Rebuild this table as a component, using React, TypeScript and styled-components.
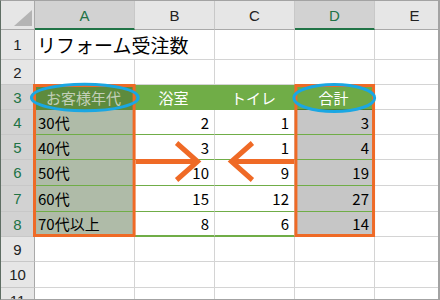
import React from 'react';
import styled, { createGlobalStyle, css } from 'styled-components';

const GlobalStyle = createGlobalStyle`
  html, body {
    margin: 0;
    padding: 0;
    background: #ffffff;
  }
  body {
    font-family: "Noto Sans CJK JP", "Liberation Sans", sans-serif;
  }
`;

type Tone = 'blank' | 'head' | 'headActive' | 'headTotal' | 'body' | 'bodyAge' | 'bodyTotal';

const ages = ['30代', '40代', '50代', '60代', '70代以上'];
const bath = [2, 3, 10, 15, 8];
const toilet = [1, 1, 9, 12, 6];
const total = bath.map((v, i) => v + toilet[i]);

const columns = ['A', 'B', 'C', 'D', 'E'];
const selectedColumns = ['A', 'D'];
const rowNumbers = Array.from({ length: 11 }, (_, i) => i + 1);

const ORANGE = '#ef6a26';
const CYAN = '#1aa7e3';

type CellSpec = { text?: React.ReactNode; tone: Tone; align?: 'left' | 'center' | 'right'; last?: boolean };

const buildRow = (row: number): CellSpec[] => {
  if (row === 3) {
    return [
      { text: 'お客様年代', tone: 'headActive', align: 'center' },
      { text: '浴室', tone: 'head', align: 'center' },
      { text: 'トイレ', tone: 'head', align: 'center' },
      { text: '合計', tone: 'headTotal', align: 'center' },
      { tone: 'blank' },
    ];
  }
  if (row >= 4 && row <= 8) {
    const i = row - 4;
    const last = row === 8;
    return [
      { text: ages[i], tone: 'bodyAge', align: 'left', last },
      { text: bath[i], tone: 'body', align: 'right', last },
      { text: toilet[i], tone: 'body', align: 'right', last },
      { text: total[i], tone: 'bodyTotal', align: 'right', last },
      { tone: 'blank' },
    ];
  }
  return columns.map(() => ({ tone: 'blank' as Tone }));
};

const App: React.FC = () => {
  return (
    <>
      <GlobalStyle />
      <Window>
        <Sheet>
          <Grid>
            <Corner />
            {columns.map((c) => (
              <ColHead key={c} $selected={selectedColumns.includes(c)}>
                {c}
              </ColHead>
            ))}

            {rowNumbers.map((row) => (
              <React.Fragment key={row}>
                <RowHead $selected={row >= 3 && row <= 8}>{row}</RowHead>
                {row === 1 ? (
                  <>
                    <TitleCell>
                      <Title>リフォーム受注数</Title>
                    </TitleCell>
                    <Cell $tone="blank" />
                    <Cell $tone="blank" />
                    <Cell $tone="blank" />
                    <Cell $tone="blank" />
                  </>
                ) : (
                  buildRow(row).map((cell, i) => (
                    <Cell key={i} $tone={cell.tone} $align={cell.align ?? 'left'} $last={!!cell.last}>
                      {cell.text}
                    </Cell>
                  ))
                )}
              </React.Fragment>
            ))}
          </Grid>

          {/* hand-drawn markup over the sheet: boxes, circles and arrows */}
          <Markup viewBox="1 1 438 298" preserveAspectRatio="none">
            <rect x={34.6} y={85.5} width={99.8} height={150} fill="none" stroke={ORANGE} strokeWidth={3} />
            <rect x={296.6} y={85.5} width={77.8} height={150} fill="none" stroke={ORANGE} strokeWidth={3} />

            <ellipse cx={85} cy={97.5} rx={53.5} ry={13.3} fill="none" stroke={CYAN} strokeWidth={3} />
            <ellipse cx={335} cy={98} rx={40.5} ry={13.5} fill="none" stroke={CYAN} strokeWidth={3} />

            <g stroke={ORANGE} strokeWidth={5} fill="none" strokeLinejoin="miter">
              <line x1={136} y1={161.5} x2={197} y2={161.5} />
              <polyline points="177,143 198,161.5 177,180" />
              <line x1={233} y1={161.5} x2={295} y2={161.5} />
              <polyline points="253,143 232,161.5 253,180" />
            </g>
          </Markup>
        </Sheet>
      </Window>
    </>
  );
};

export default App;

const Window = styled.div`
  width: 440px;
  height: 300px;
  box-sizing: border-box;
  border: 1px solid #a3a3a3;
  border-left-color: #5f6e64;
  border-right-width: 2px;
  overflow: hidden;
  background: #ffffff;
`;

const Sheet = styled.div`
  position: relative;
  width: 100%;
  height: 100%;
  overflow: hidden;
`;

const Grid = styled.div`
  display: grid;
  grid-template-columns: 34px 100px 80px 80px 80px 80px;
  grid-template-rows: 29px 30px 25px 25px 25px 25px 26px 26px 25px 25px 26px 26px;
`;

const headerBase = css`
  box-sizing: border-box;
  display: flex;
  align-items: center;
  justify-content: center;
  font-family: "Liberation Sans", "Noto Sans", sans-serif;
  font-size: 15px;
  background: #e6e6e6;
`;

const Corner = styled.div`
  ${headerBase};
  position: relative;
  border-right: 1px solid #a9a9a9;
  border-bottom: 1px solid #a9a9a9;

  &::after {
    content: '';
    position: absolute;
    right: 2px;
    bottom: 3px;
    width: 18px;
    height: 16px;
    background: #b4b4b4;
    clip-path: polygon(100% 0, 100% 100%, 0 100%);
  }
`;

const ColHead = styled.div<{ $selected: boolean }>`
  ${headerBase};
  padding-top: 1px;
  border-right: 1px solid #c8c8c8;
  border-bottom: ${({ $selected }) => ($selected ? '2px solid #217346' : '1px solid #a9a9a9')};
  background: ${({ $selected }) => ($selected ? '#d2d2d2' : '#e6e6e6')};
  color: ${({ $selected }) => ($selected ? '#217346' : '#222222')};
`;

const RowHead = styled.div<{ $selected: boolean }>`
  ${headerBase};
  border-right: 1px solid #a9a9a9;
  border-bottom: 1px solid #c8c8c8;
  background: ${({ $selected }) => ($selected ? '#d2d2d2' : '#e6e6e6')};
  color: ${({ $selected }) => ($selected ? '#217346' : '#222222')};
`;

const toneStyles: Record<Tone, ReturnType<typeof css>> = {
  blank: css`
    background: #ffffff;
    border-right-color: #d4d4d4;
    border-bottom-color: #d4d4d4;
  `,
  head: css`
    background: #70ad47;
    color: #ffffff;
    border-right-color: #70ad47;
    border-bottom-color: #70ad47;
  `,
  headActive: css`
    background: #5d8b3d;
    color: #c3cfb9;
    border-right-color: #5d8b3d;
    border-bottom-color: #5d8b3d;
  `,
  headTotal: css`
    background: #6ea946;
    color: #ffffff;
    border-right-color: #4f7f31;
    border-bottom-color: #4f7f31;
    box-shadow: inset 1px 1px 0 #4f7f31;
  `,
  body: css`
    background: #ffffff;
    color: #000000;
    border-right-color: #d4d4d4;
    border-bottom-color: #70ad47;
  `,
  bodyAge: css`
    background: #afbba8;
    color: #000000;
    border-right-color: #afbba8;
    border-bottom-color: #70ad47;
  `,
  bodyTotal: css`
    background: #c6c6c6;
    color: #000000;
    border-right-color: #c6c6c6;
    border-bottom-color: #70ad47;
  `,
};

const Cell = styled.div<{ $tone: Tone; $align?: 'left' | 'center' | 'right'; $last?: boolean }>`
  box-sizing: border-box;
  display: flex;
  align-items: center;
  justify-content: ${({ $align }) =>
    $align === 'right' ? 'flex-end' : $align === 'center' ? 'center' : 'flex-start'};
  padding: 0 5px 0 3px;
  border-right: 1px solid;
  border-bottom: ${({ $last }) => ($last ? '2px' : '1px')} solid;
  font-size: 15px;
  line-height: 1;
  white-space: nowrap;
  color: #000000;
  ${({ $tone }) => toneStyles[$tone]};
`;

const TitleCell = styled.div`
  box-sizing: border-box;
  position: relative;
  z-index: 1;
  display: flex;
  align-items: center;
  padding: 0 0 0 2px;
  border-bottom: 1px solid #d4d4d4;
  overflow: visible;
  white-space: nowrap;
`;

const Title = styled.span`
  font-size: 19px;
  line-height: 1;
  color: #000000;
`;

const Markup = styled.svg`
  position: absolute;
  inset: 0;
  width: 100%;
  height: 100%;
  pointer-events: none;
  z-index: 2;
`;
